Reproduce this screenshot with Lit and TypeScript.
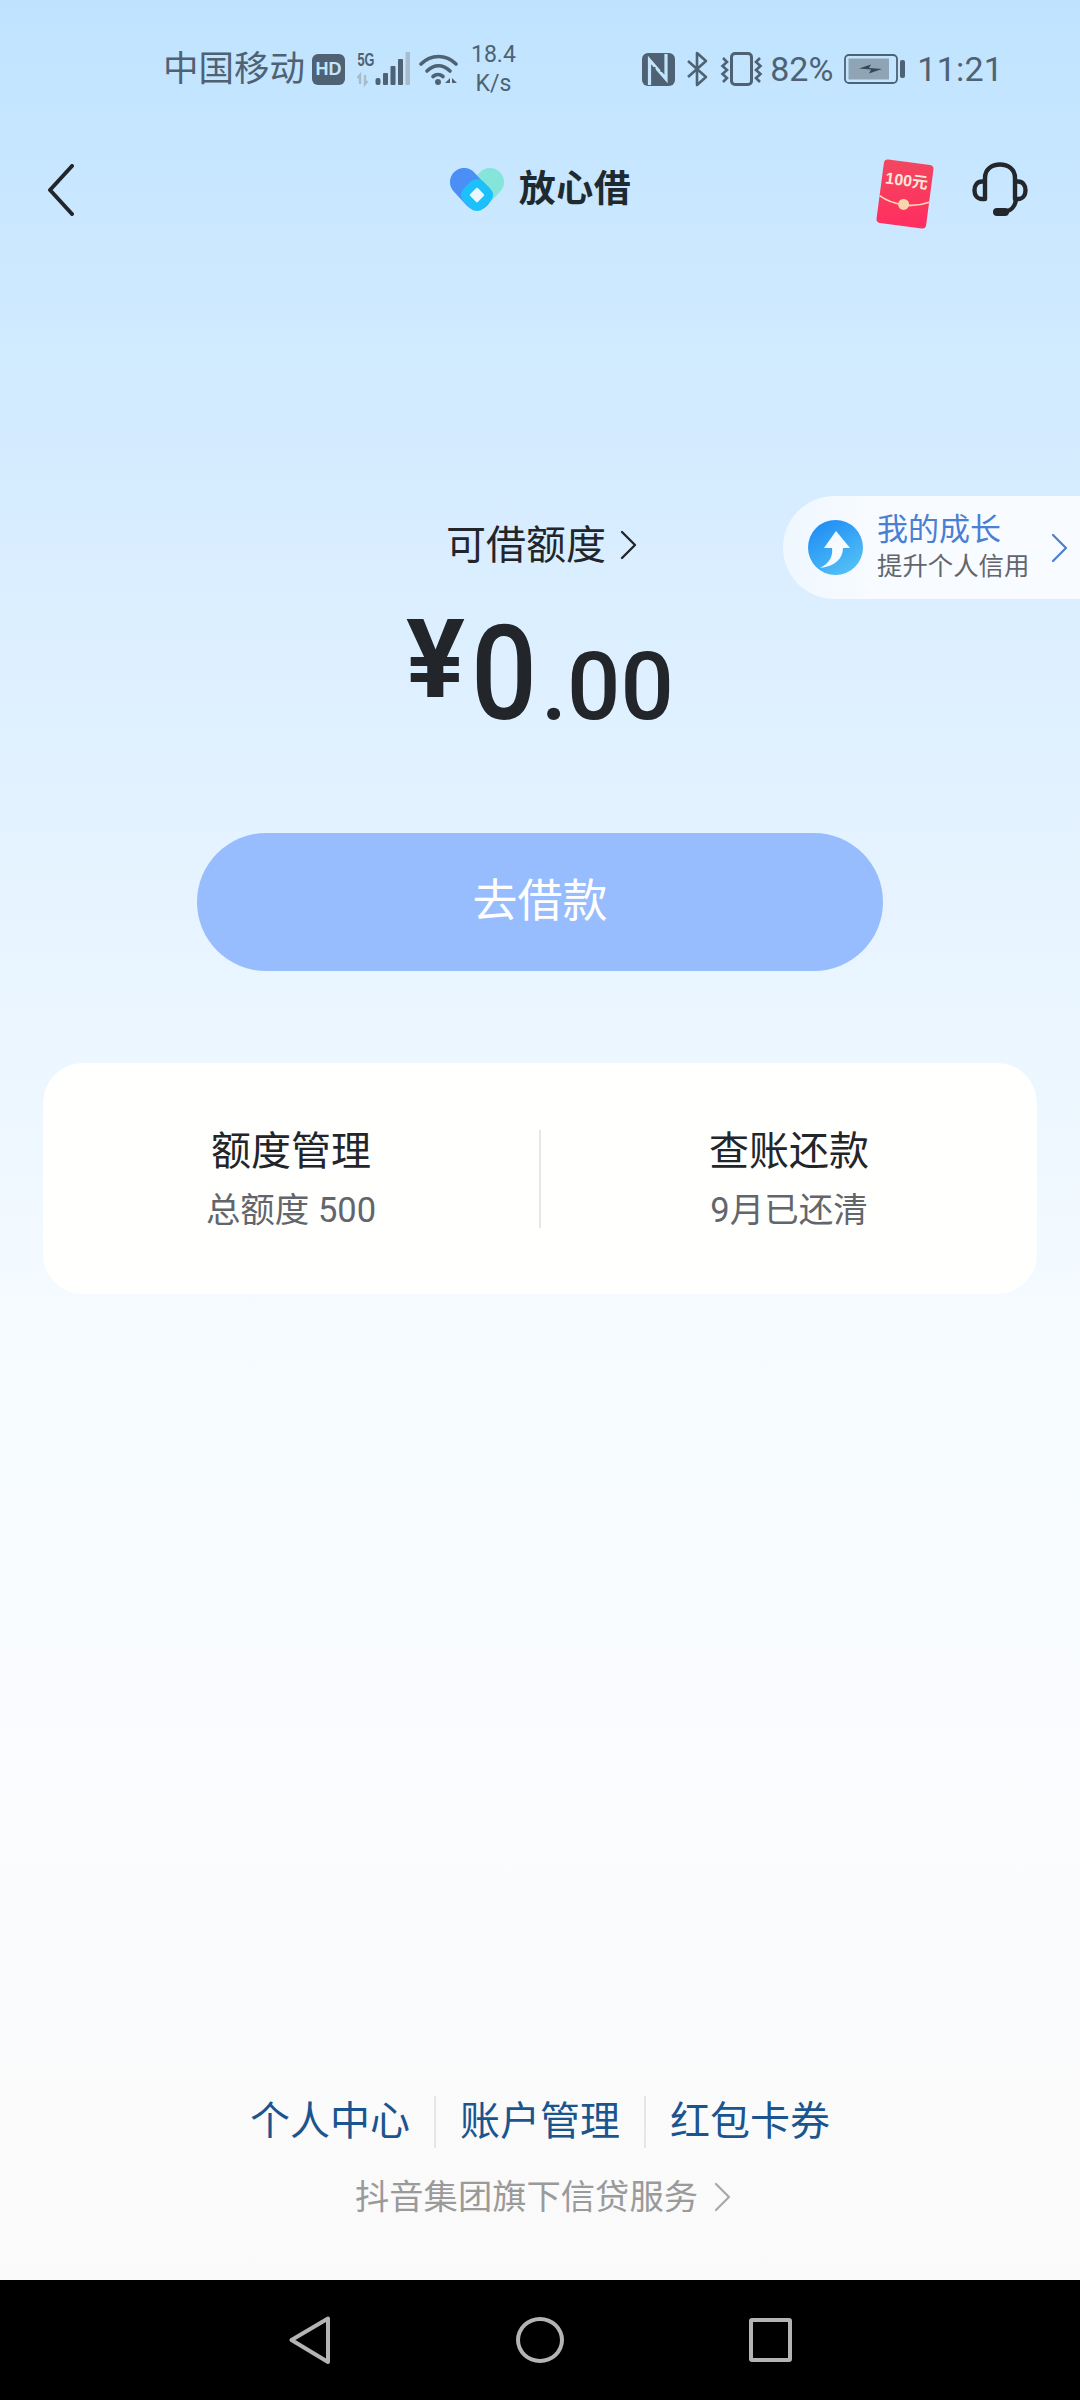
import { LitElement, css, html, svg } from 'lit'
import { customElement } from 'lit/decorators.js'

const chevron = (color: string, width = 2.4) => html`
  <svg class="chevron" width="17" height="30" viewBox="0 0 17 30" fill="none">
    <path d="M2 2 L15 15 L2 28" stroke=${color} stroke-width=${width} stroke-linecap="round" stroke-linejoin="round" />
  </svg>
`

const signalIcon = svg`
  <text x="0.5" y="14" font-family="Liberation Sans Narrow, Liberation Sans, sans-serif" font-size="18" font-weight="700" fill="#4e6273" textLength="17" lengthAdjust="spacingAndGlyphs">5G</text>
  <path d="M3 32 V23 L0.5 26 M8 23 V32 L10.5 29" stroke="#a9bccb" stroke-width="2.4" fill="none" />
  <g fill="#4e6273">
    <rect x="18.5" y="26" width="5" height="7" rx="2" />
    <rect x="26" y="21" width="5" height="12" rx="1" />
    <rect x="33.5" y="14" width="5" height="19" rx="1" />
    <rect x="41" y="7" width="5" height="26" rx="1" />
  </g>
  <rect x="48.5" y="0" width="4.5" height="33" rx="1" fill="#a9bccb" />
`

const wifiIcon = svg`
  <g fill="none" stroke="#4e6273" stroke-width="3.6" stroke-linecap="round">
    <path d="M2 11 C12 1 27 1 37 11" />
    <path d="M8 18 C15 11 24 11 31 18" />
    <path d="M14 23.5 C17 21 21 21 24 23.5" />
  </g>
  <circle cx="19" cy="29" r="3" fill="#4e6273" />
  <path d="M26 30 L31 25 V30 Z M33 25 L38 30 H33 Z" fill="#4e6273" />
`

const nfcIcon = svg`
  <rect x="0" y="0" width="33" height="33" rx="6" fill="#4e6273" />
  <path d="M7.5 32 V7 L24 26 V1" fill="none" stroke="#c4e4fd" stroke-width="3.2" />
  <path d="M12 20 V14 M20 19 V13" stroke="#4e6273" stroke-width="3" />
`

const bluetoothIcon = svg`
  <path d="M2 10 L20 26 L11 34 V2 L20 10 L2 26" fill="none" stroke="#4e6273" stroke-width="2.6" stroke-linejoin="round" />
`

const vibrateIcon = svg`
  <rect x="11.5" y="1.5" width="20" height="31" rx="3.5" fill="none" stroke="#4e6273" stroke-width="3" />
  <path d="M3 6 L7 10 L2.5 14 L7 18 L2.5 22 L7 26 L3 30" fill="none" stroke="#4e6273" stroke-width="2.6" />
  <path d="M40 6 L36 10 L40.5 14 L36 18 L40.5 22 L36 26 L40 30" fill="none" stroke="#4e6273" stroke-width="2.6" />
`

const batteryIcon = svg`
  <rect x="1" y="1" width="52" height="28" rx="4" fill="none" stroke="#4e6273" stroke-width="1.8" />
  <rect x="4.5" y="4.5" width="40.5" height="21" fill="#8fa5b6" />
  <path d="M15 14.5 L27 10.5 L25 14 L38 15 L25 19.5 L27 15.5 Z" fill="#34495a" />
  <rect x="56" y="6" width="5" height="18" rx="2" fill="#4e6273" />
`

const backIcon = svg`
  <path d="M25 2 L3 26 L25 50" fill="none" stroke="#22262a" stroke-width="4" stroke-linecap="round" stroke-linejoin="round" />
`

const logoIcon = svg`
  <line x1="41" y1="14" x2="28" y2="28" stroke="#86e5d9" stroke-width="28" stroke-linecap="round" />
  <line x1="15" y1="14" x2="28" y2="28" stroke="#4a8ef6" stroke-width="28" stroke-linecap="round" />
  <rect x="14" y="13" width="28" height="28" rx="9" fill="#1cc1fc" transform="rotate(45 28 27)" />
  <rect x="22.5" y="21.5" width="11" height="11" rx="1.5" fill="#e9f8ff" transform="rotate(45 28 27)" />
`

const packetIcon = svg`
  <defs>
    <linearGradient id="packet" x1="0" y1="0" x2="0.2" y2="1">
      <stop offset="0" stop-color="#f2485f" />
      <stop offset="1" stop-color="#ff2f60" />
    </linearGradient>
  </defs>
  <g transform="rotate(7.5 30 37)">
    <rect x="5" y="5" width="50" height="64" rx="4" fill="url(#packet)" />
    <path d="M5 42 C20 50 40 50 55 42" fill="none" stroke="#ffd9b8" stroke-width="1.6" />
    <circle cx="30" cy="47.5" r="5.5" fill="#fad4ad" />
    <text x="30" y="29" text-anchor="middle" font-family="Liberation Sans, Noto Sans CJK SC, sans-serif" font-size="16" font-weight="700" fill="#ffe6d8">100元</text>
  </g>
`

const headsetIcon = svg`
  <g fill="none" stroke="#23272b" stroke-width="4.4" stroke-linecap="round" stroke-linejoin="round">
    <path d="M13 19 V16 C13 7 20 2.5 28 2.5 C36 2.5 43 7 43 16 V19" />
    <path d="M13 19.5 V37 H10 C5.5 37 2.5 33.5 2.5 28.5 C2.5 23 5.5 19.5 10 19.5 Z" />
    <path d="M43 19.5 V37 H46 C50.5 37 53.5 33.5 53.5 28.5 C53.5 23 50.5 19.5 46 19.5 Z" />
    <path d="M44 38 C43 44 39 49 33 49.5" />
  </g>
  <rect x="21" y="46" width="16" height="8" rx="4" fill="#23272b" />
`

const growthIcon = svg`
  <defs>
    <linearGradient id="growth" x1="0.2" y1="0" x2="0.8" y2="1">
      <stop offset="0" stop-color="#1f8cf5" />
      <stop offset="1" stop-color="#55c3f5" />
    </linearGradient>
  </defs>
  <circle cx="27.5" cy="27.5" r="27.5" fill="url(#growth)" />
  <path d="M28 11 L42 28 H35 C35 38 28 46 12 48 C22 43 25 36 24 28 H16 Z" fill="#ffffff" opacity="0.95" />
`

const homeBarBack = svg`
  <path d="M2.5 24 L39 2.5 V46 Z" fill="none" stroke="#b4b4b4" stroke-width="4" stroke-linejoin="round" />
`

@customElement('app-root')
export class AppRoot extends LitElement {
  static styles = css`
    :host {
      display: block;
      position: relative;
      width: 1080px;
      height: 2400px;
      overflow: hidden;
      font-family: Roboto, "Noto Sans CJK SC", sans-serif;
      color: #22262a;
    }
    svg { display: block; flex: none; }
    .page {
      height: 2400px;
      display: flex;
      flex-direction: column;
    }
    .content {
      flex: 1;
      display: flex;
      flex-direction: column;
      background: linear-gradient(180deg, #bfe3ff 0%, #d0eaff 15%, #e3f2ff 35%, #f5fbff 58%, #fbfcfe 80%, #fafafa 100%);
    }
    .status {
      height: 100px;
      padding: 38px 77px 0 163px;
      display: flex;
      align-items: center;
      justify-content: space-between;
      color: #4e6273;
      box-sizing: border-box;
    }
    .status-group { display: flex; align-items: center; }
    .carrier { font-size: 35.5px; line-height: 40px; white-space: nowrap; }
    .hd {
      width: 33px;
      height: 31px;
      margin-left: 7px;
      border-radius: 6px;
      background: #4e6273;
      color: #c4e4fd;
      font-family: "Liberation Sans", sans-serif;
      font-size: 18px;
      font-weight: 700;
      line-height: 31px;
      text-align: center;
    }
    .signal { margin-left: 12px; overflow: visible; }
    .wifi { margin-left: 7px; }
    .speed {
      margin-left: 12px;
      font-size: 23px;
      line-height: 29px;
      text-align: center;
    }
    .bt { margin-left: 11px; }
    .vibrate { margin-left: 12px; }
    .pct { margin-left: 7px; font-size: 34px; line-height: 40px; }
    .battery { margin-left: 11px; }
    .time { margin-left: 12px; font-size: 34px; line-height: 40px; letter-spacing: 0.2px; }

    .nav {
      height: 180px;
      padding: 0 52px 0 47px;
      display: grid;
      grid-template-columns: 1fr auto 1fr;
      align-items: center;
    }
    .brand { display: flex; align-items: center; gap: 14px; padding-left: 5px; }
    .brand-name { font-size: 37px; font-weight: 700; line-height: 44px; color: #1f2a30; letter-spacing: 0.5px; }
    .nav-actions {
      display: flex;
      align-items: center;
      justify-content: flex-end;
      gap: 37px;
    }
    .packet { margin-top: 8px; }
    .hero {
      margin-top: 241px;
      display: flex;
      flex-direction: column;
      align-items: center;
    }
    .limit {
      display: flex;
      align-items: center;
      gap: 14px;
      margin-left: 3px;
      font-size: 40px;
      line-height: 50px;
      height: 50px;
    }
    .limit .chevron { margin-top: -2px; }
    .amount {
      margin-top: 37px;
      height: 132px;
      display: flex;
      align-items: baseline;
      font-weight: 500;
      line-height: 132px;
      color: #22262a;
    }
    .yen { font-size: 110px; font-weight: 700; margin-right: 6px; align-self: flex-start; line-height: 104px; }
    .int { display: inline-block; width: 70px; font-size: 132px; transform: scaleX(0.88); transform-origin: left; }
    .dec { font-size: 94px; }
    .borrow {
      margin-top: 93px;
      width: 686px;
      height: 138px;
      border-radius: 69px;
      background: #98bdff;
      color: #ffffff;
      font-size: 45px;
      line-height: 138px;
      text-align: center;
    }
    .card {
      margin: 92px 43px 0;
      height: 231px;
      border-radius: 40px;
      background: #fffffe;
      display: grid;
      grid-template-columns: 1fr 2px 1fr;
      align-items: center;
    }
    .card-col { text-align: center; }
    .card-title { font-size: 40px; line-height: 52px; color: #22262a; }
    .card-sub { margin-top: 10px; font-size: 34.5px; line-height: 44px; color: #62666c; }
    .card-rule { height: 98px; background: #e6e6e6; }

    .footer {
      margin-top: auto;
      padding-bottom: 61px;
      display: flex;
      flex-direction: column;
      align-items: center;
    }
    .links { display: flex; align-items: center; }
    .link { font-size: 40px; line-height: 52px; color: #1a5590; padding: 0 24px; }
    .link + .link { border-left: 2px solid #e6e6e6; }
    .group {
      margin-top: 27px;
      margin-left: 6px;
      display: flex;
      align-items: center;
      gap: 16px;
      font-size: 34.3px;
      line-height: 44px;
      color: #9a9a9a;
    }
    .home-bar {
      height: 120px;
      flex: none;
      background: #000000;
      display: grid;
      grid-template-columns: repeat(3, 230px);
      justify-content: center;
      align-items: center;
      justify-items: center;
    }
    .circle {
      width: 48px;
      height: 46px;
      box-sizing: border-box;
      border: 4px solid #b4b4b4;
      border-radius: 50%;
    }
    .square {
      width: 43px;
      height: 44px;
      box-sizing: border-box;
      border: 4px solid #b4b4b4;
      border-radius: 3px;
    }
    .growth {
      position: absolute;
      top: 496px;
      right: 0;
      width: 297px;
      height: 103px;
      box-sizing: border-box;
      padding-left: 25px;
      border-radius: 52px 0 0 52px;
      background: linear-gradient(90deg, #eff7ff 0%, #f8fbff 30%);
      display: flex;
      align-items: center;
    }
    .growth-text { margin-left: 14px; margin-top: -2px; }
    .growth-title { font-size: 31px; line-height: 40px; color: #4a7fd4; }
    .growth-sub { font-size: 25.4px; line-height: 33px; color: #62666c; white-space: nowrap; }
    .growth .chevron { margin-left: 22px; }
  `

  render() {
    return html`
      <div class="page">
        <div class="content">
          <div class="status">
            <div class="status-group">
              <span class="carrier">中国移动</span>
              <span class="hd">HD</span>
              <svg class="signal" width="55" height="43" viewBox="0 -4 55 43">${signalIcon}</svg>
              <svg class="wifi" width="40" height="33" viewBox="0 0 40 33">${wifiIcon}</svg>
              <div class="speed">18.4<br />K/s</div>
            </div>
            <div class="status-group">
              <svg width="33" height="33" viewBox="0 0 33 33">${nfcIcon}</svg>
              <svg class="bt" width="22" height="36" viewBox="0 0 22 36">${bluetoothIcon}</svg>
              <svg class="vibrate" width="43" height="34" viewBox="0 0 43 34">${vibrateIcon}</svg>
              <span class="pct">82%</span>
              <svg class="battery" width="61" height="30" viewBox="0 0 61 30">${batteryIcon}</svg>
              <span class="time">11:21</span>
            </div>
          </div>

          <div class="nav">
            <svg width="28" height="52" viewBox="0 0 28 52">${backIcon}</svg>
            <div class="brand">
              <svg width="56" height="44" viewBox="0 0 56 44">${logoIcon}</svg>
              <span class="brand-name">放心借</span>
            </div>
            <div class="nav-actions">
              <svg class="packet" width="60" height="74" viewBox="0 0 60 74">${packetIcon}</svg>
              <svg width="56" height="56" viewBox="0 0 56 56">${headsetIcon}</svg>
            </div>
          </div>

          <div class="hero">
            <div class="limit"><span>可借额度</span>${chevron('#22262a')}</div>
            <div class="amount">
              <span class="yen">¥</span><span class="int">0</span><span class="dec">.00</span>
            </div>
            <div class="borrow">去借款</div>
          </div>

          <div class="card">
            <div class="card-col">
              <div class="card-title">额度管理</div>
              <div class="card-sub">总额度 500</div>
            </div>
            <div class="card-rule"></div>
            <div class="card-col">
              <div class="card-title">查账还款</div>
              <div class="card-sub">9月已还清</div>
            </div>
          </div>

          <div class="footer">
            <div class="links">
              <span class="link">个人中心</span>
              <span class="link">账户管理</span>
              <span class="link">红包卡券</span>
            </div>
            <div class="group"><span>抖音集团旗下信贷服务</span>${chevron('#a8a8a8', 2.2)}</div>
          </div>
        </div>

        <div class="home-bar">
          <svg width="42" height="49" viewBox="0 0 42 49">${homeBarBack}</svg>
          <div class="circle"></div>
          <div class="square"></div>
        </div>
      </div>

      <div class="growth">
        <svg width="55" height="55" viewBox="0 0 55 55">${growthIcon}</svg>
        <div class="growth-text">
          <div class="growth-title">我的成长</div>
          <div class="growth-sub">提升个人信用</div>
        </div>
        ${chevron('#4a7fd4', 2.2)}
      </div>
    `
  }
}
